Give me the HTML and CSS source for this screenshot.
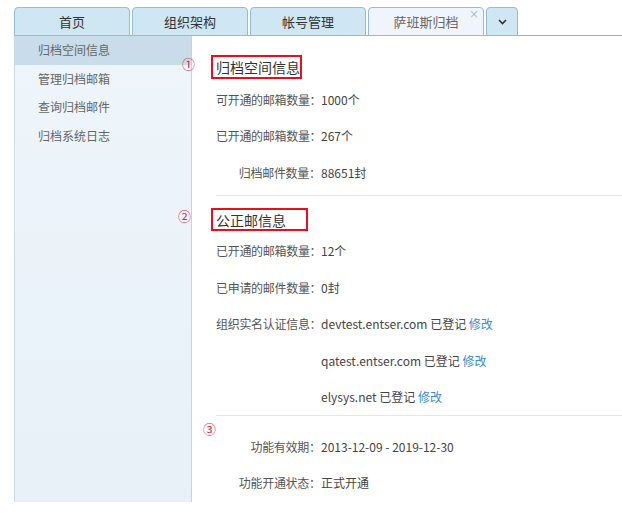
FILE: index.html
```html
<!DOCTYPE html>
<html lang="zh">
<head>
<meta charset="utf-8">
<link rel="stylesheet" href="styles.css">
</head>
<body>
<div class="page">
  <div class="tabs">
    <div class="tab">首页</div>
    <div class="tab">组织架构</div>
    <div class="tab">帐号管理</div>
    <div class="tab active">萨班斯归档<span class="close">×</span></div>
    <div class="tab more"><svg width="9" height="6" viewBox="0 0 9 6"><path d="M1 1 L4.5 4.5 L8 1" fill="none" stroke="#333" stroke-width="1.6"/></svg></div>
  </div>
  <div class="main">
    <div class="sidebar">
      <div class="nav-item selected">归档空间信息</div>
      <div class="nav-item">管理归档邮箱</div>
      <div class="nav-item">查询归档邮件</div>
      <div class="nav-item">归档系统日志</div>
    </div>
    <div class="content">
      <div class="section s1">
        <span class="mark m1">①</span>
        <div class="heading h1">归档空间信息</div>
        <div class="rows">
          <div class="label">可开通的邮箱数量<span class="colon">：</span></div><div class="value">1000个</div>
          <div class="label">已开通的邮箱数量<span class="colon">：</span></div><div class="value">267个</div>
          <div class="label">归档邮件数量<span class="colon">：</span></div><div class="value">88651封</div>
        </div>
      </div>
      <div class="divider"></div>
      <div class="section s2">
        <span class="mark m2">②</span>
        <div class="heading h2">公正邮信息</div>
        <div class="rows">
          <div class="label">已开通的邮箱数量<span class="colon">：</span></div><div class="value">12个</div>
          <div class="label">已申请的邮件数量<span class="colon">：</span></div><div class="value">0封</div>
          <div class="label">组织实名认证信息<span class="colon">：</span></div><div class="value">devtest.entser.com 已登记 <a class="link">修改</a></div>
          <div class="label"></div><div class="value">qatest.entser.com 已登记 <a class="link">修改</a></div>
          <div class="label"></div><div class="value">elysys.net 已登记 <a class="link">修改</a></div>
        </div>
      </div>
      <div class="divider d2"></div>
      <div class="section s3">
        <span class="mark m3">③</span>
        <div class="rows">
          <div class="label">功能有效期<span class="colon">：</span></div><div class="value">2013-12-09 - 2019-12-30</div>
          <div class="label">功能开通状态<span class="colon">：</span></div><div class="value">正式开通</div>
        </div>
      </div>
    </div>
  </div>
</div>
</body>
</html>
```

FILE: styles.css
```css
* { box-sizing: border-box; }
html, body { margin: 0; padding: 0; background: #fff; }
body {
  font-family: "Noto Sans CJK SC", "Noto Sans", sans-serif;
  color: #444;
  font-size: 12px;
}
.page { padding-left: 14px; width: 622px; }
.tabs {
  display: flex;
  align-items: flex-end;
  height: 36px;
  padding-top: 7px;
  border-bottom: 1px solid #8fb6cf;
  gap: 2px;
}
.tab {
  position: relative;
  width: 116px;
  height: 29px;
  margin-bottom: -1px;
  background: #cfe6f3;
  border: 1px solid #93bdd7;
  border-radius: 4px 4px 0 0;
  display: flex;
  align-items: center;
  justify-content: center;
  font-size: 13px;
  color: #333;
}
.tab.active {
  background: #eff5fa;
  color: #666;
  border-bottom-color: #93bdd7;
}
.close {
  position: absolute;
  right: 4px;
  top: 0px;
  font-size: 10px;
  color: #9aaab8;
  line-height: 12px;
}
.tab.more { width: 32px; }
.main { display: flex; }
.sidebar {
  width: 178px;
  height: 466px;
  background: linear-gradient(#eef5fb, #e8f1f8);
  border-left: 1px solid #c6dcec;
  border-right: 1px solid #bcd6e9;
}
.nav-item {
  height: 28.5px;
  line-height: 28.5px;
  padding-left: 23px;
  color: #666;
  font-size: 12px;
}
.nav-item.selected { background: #c8dce9; }
.content { flex: 1; padding-top: 19px; }
.section { position: relative; }
.mark {
  position: absolute;
  color: #e0223a;
  font-size: 13px;
  line-height: 14px;
}
.m1 { left: -10px; top: 2px; }
.m2 { left: -14px; top: 1px; }
.m3 { left: 11px; top: -4px; }
.heading {
  margin-left: 19px;
  height: 24px;
  border: 2px solid #e4101f;
  font-size: 14px;
  color: #333;
  line-height: 20px;
  padding-left: 3px;
}
.h1 { width: 91px; }
.h2 { width: 97px; height: 23px; }
.rows {
  display: grid;
  grid-template-columns: 105px 1fr;
  margin-left: 24px;
  grid-auto-rows: 36.5px;
  align-items: center;
  padding-top: 2px;
}
.label { text-align: right; white-space: nowrap; color: #555; letter-spacing: -0.3px; }
.colon { font-family: "Noto Sans CJK TC", sans-serif; letter-spacing: 0; }
.value { white-space: nowrap; color: #444; }
.link { color: #3d8ad0; }
.divider {
  margin-left: 24px;
  border-top: 1px solid #e6e6e6;
  margin-top: 4px;
}
.d2 { margin-top: 0; }
.s2 { margin-top: 12px; }
.s3 { margin-top: 10px; }
```
